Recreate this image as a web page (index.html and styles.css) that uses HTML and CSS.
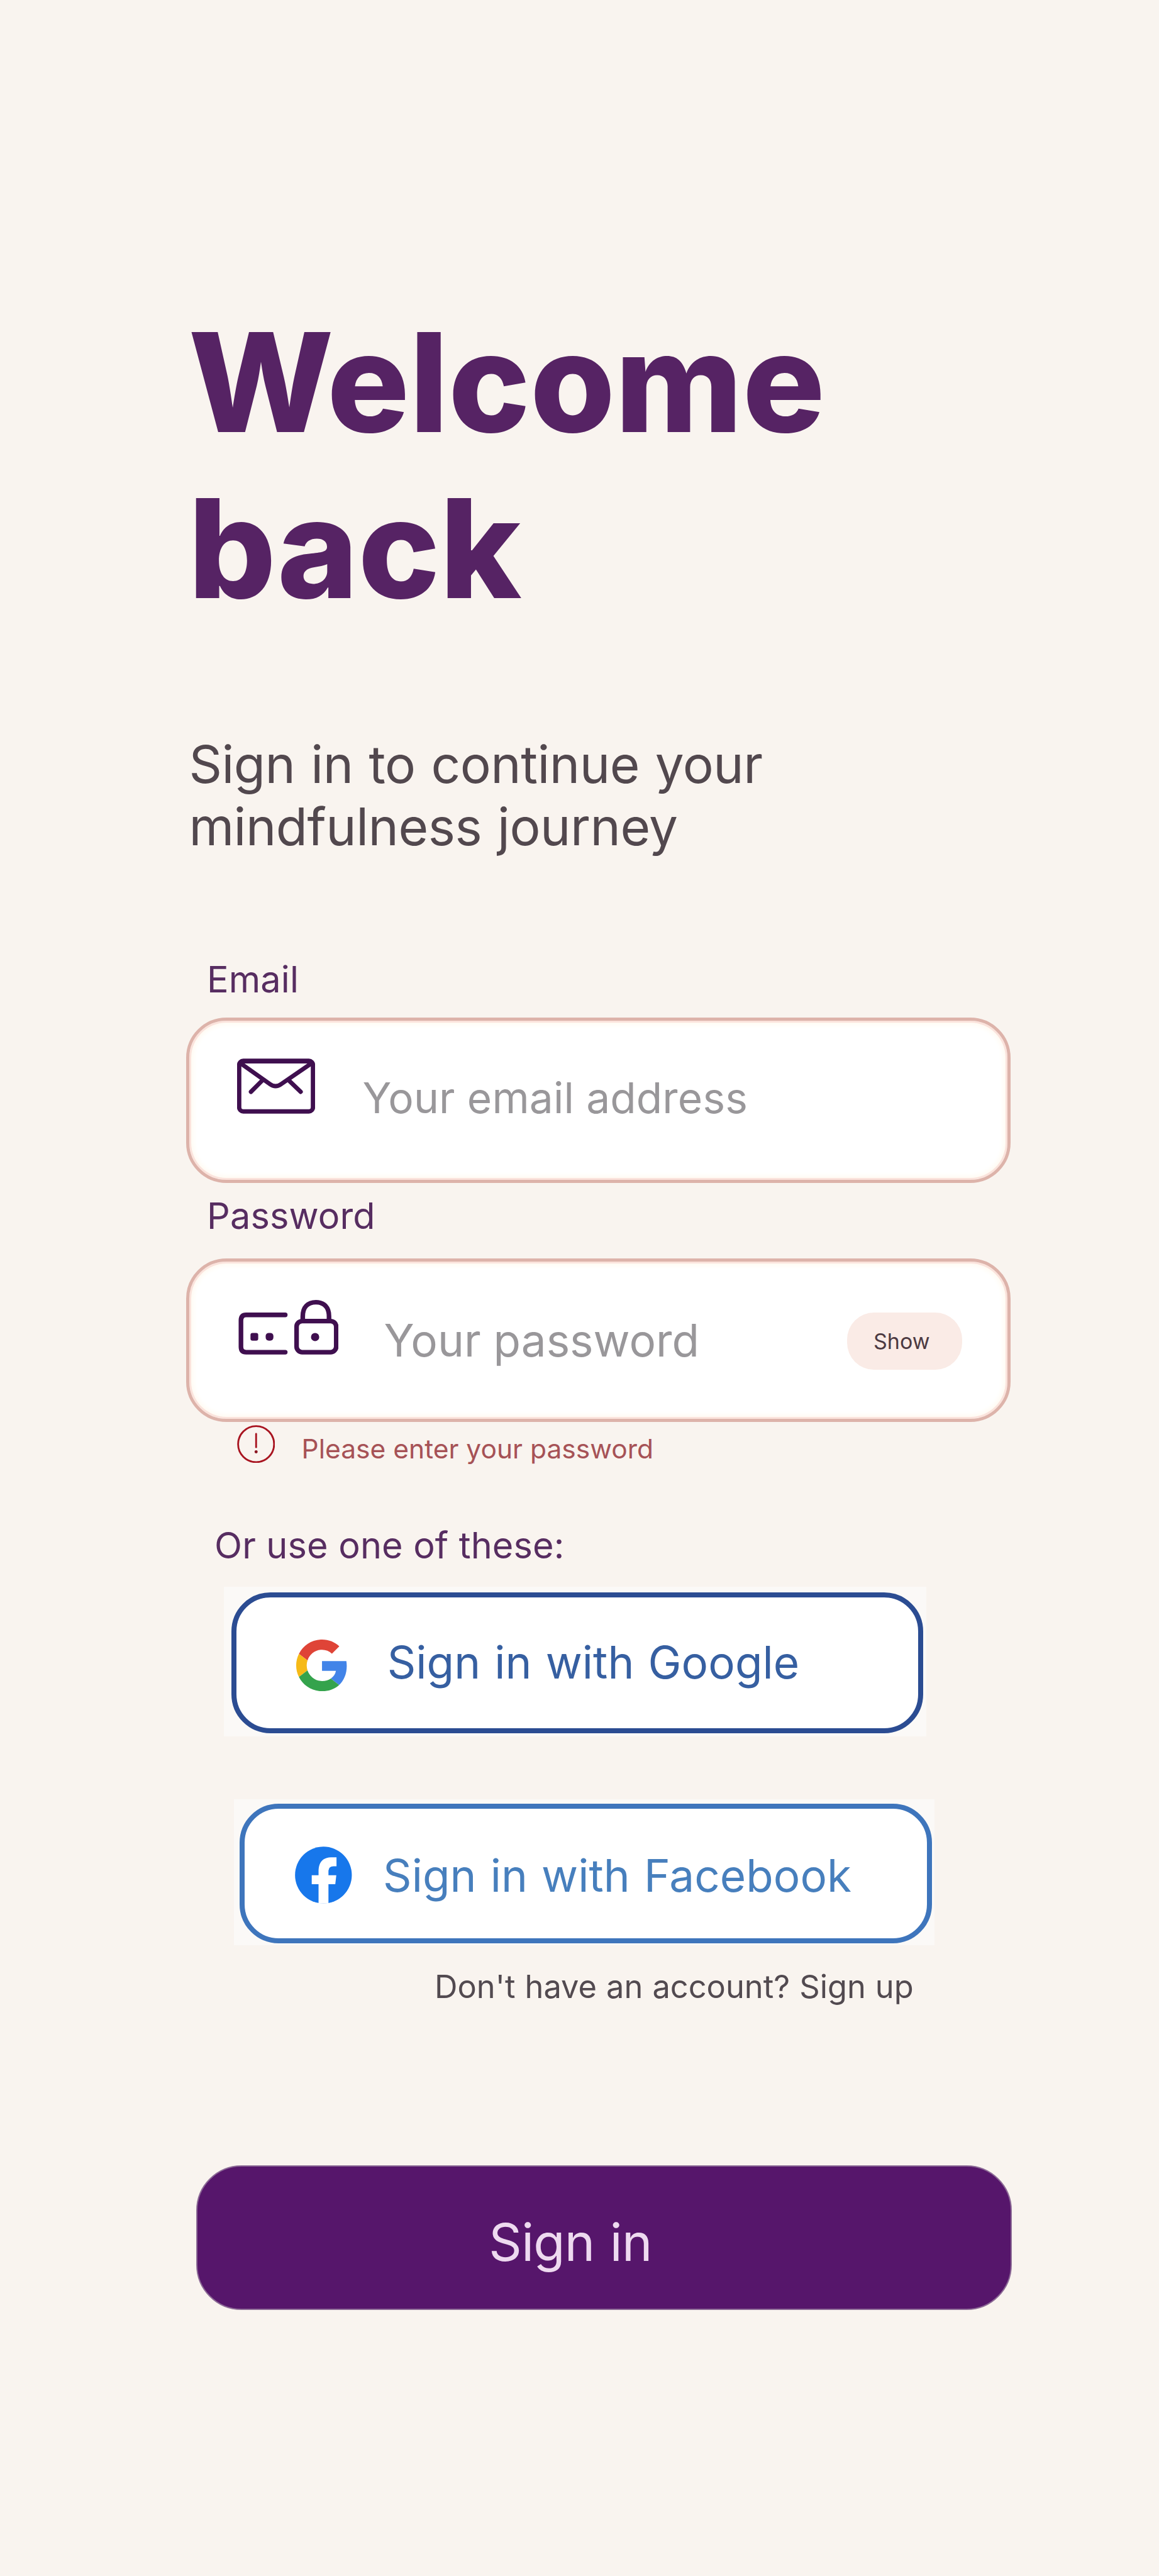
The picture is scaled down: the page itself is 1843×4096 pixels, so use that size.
FILE: index.html
```html
<!DOCTYPE html>
<html lang="en">
<head>
<meta charset="utf-8">
<title>Welcome back</title>
<link rel="stylesheet" href="styles.css">
</head>
<body>
<main class="page">
  <h1 class="title">Welcome<br>back</h1>
  <p class="subtitle">Sign in to continue your<br>mindfulness journey</p>

  <label class="label label-email">Email</label>
  <div class="field field-email">
    <svg class="icon-mail" viewBox="0 0 152 108" fill="none" stroke="#3f0f4f" stroke-width="8.500" stroke-linecap="round" stroke-linejoin="round">
      <rect x="4" y="4.500" width="144" height="99" rx="8"/>
      <path d="M9 11 64 50Q75 58 86 50L143 11M48 44 27 65M101 43 124 65"/>
      <path d="M12 5.500H140"/>
    </svg>
    <span class="placeholder placeholder-email">Your email address</span>
  </div>

  <label class="label label-password">Password</label>
  <div class="field field-password">
    <svg class="icon-lock" viewBox="0 0 194 106" fill="none" stroke="#3f0f4f" stroke-width="9" stroke-linecap="round" stroke-linejoin="round">
      <path d="M91 29H15Q5 29 5 40V91Q5 101.500 15 101.500H91"/>
      <rect x="113" y="41" width="77" height="60.500" rx="11"/>
      <path d="M125 40V32C125 14 135 4.500 150.500 4.500S176 14 176 32V40"/>
      <g fill="#3f0f4f" stroke="none">
        <rect x="23.500" y="64" width="15" height="15" rx="4"/>
        <rect x="53" y="64" width="15" height="15" rx="6"/>
        <circle cx="149" cy="72" r="8"/>
      </g>
    </svg>
    <span class="placeholder placeholder-password">Your password</span>
    <button class="show">Show</button>
  </div>

  <div class="error">
    <svg class="icon-error" viewBox="0 0 74 74" fill="none" stroke="#a81420" stroke-width="3.500" stroke-linecap="round">
      <circle cx="37" cy="37" r="35"/>
      <path d="M37 17V43"/>
      <circle cx="37" cy="52" r="3" fill="#8a1420" stroke="none"/>
    </svg>
    <span class="error-text">Please enter your password</span>
  </div>

  <p class="label label-or">Or use one of these:</p>

  <div class="plate plate-google">
    <button class="social google">
      <svg class="icon-google" viewBox="0 0 47 48">
        <path fill="#df4437" d="M24 9.500c3.540 0 6.710 1.220 9.210 3.600l6.850-6.850C35.900 2.380 30.470 0 24 0 14.620 0 6.510 5.380 2.560 13.220l7.980 6.190C12.430 13.720 17.740 9.500 24 9.500z"/>
        <path fill="#4284e8" d="M46.980 24.550c0-1.570-.150-3.090-.380-4.550H24v9.020h12.940c-.580 2.960-2.260 5.480-4.780 7.180l7.730 6c4.510-4.180 7.090-10.360 7.090-17.650z"/>
        <path fill="#f6ba17" d="M10.530 28.590c-.480-1.450-.760-2.990-.760-4.590s.270-3.140.760-4.590l-7.980-6.190C.920 16.460 0 20.120 0 24c0 3.880.920 7.540 2.560 10.780l7.970-6.190z"/>
        <path fill="#34a34c" d="M24 48c6.480 0 11.930-2.130 15.890-5.810l-7.730-6c-2.150 1.450-4.920 2.300-8.160 2.300-6.260 0-11.570-4.220-13.470-9.910l-7.980 6.190C6.510 42.620 14.620 48 24 48z"/>
      </svg>
      <span class="social-text google-text">Sign in with Google</span>
    </button>
  </div>

  <div class="plate plate-facebook">
    <button class="social facebook">
      <svg class="icon-facebook" viewBox="0 0 111 111">
        <circle cx="55.500" cy="55.500" r="55.300" fill="#1777eb"/>
        <path fill="#fff" d="M46 111V73.300H32.700V55.700H46V46Q47 22 70 21H81V38.300H75Q66 38.300 65.300 47V55.700H80.600L78.600 73.300H65.300V111Z"/>
      </svg>
      <span class="social-text facebook-text">Sign in with Facebook</span>
    </button>
  </div>

  <p class="signup">Don't have an account? Sign up</p>
  <button class="submit">Sign in</button>
</main>
</body>
</html>
```
FILE: styles.css
```css
* { box-sizing: border-box; }

html, body { margin: 0; padding: 0; }

body {
  width: 1843px;
  height: 4096px;
  overflow: hidden;
  background: #f9f4ef;
  font-family: Inter, "Liberation Sans", sans-serif;
}

h1, p { margin: 0; font-weight: 400; }

button {
  margin: 0;
  padding: 0;
  border: 0;
  background: none;
  font: inherit;
  text-align: left;
}

svg { display: block; flex: none; }

.page {
  display: flex;
  flex-direction: column;
  align-items: flex-start;
  padding: 476px 0 0 296px;
}

.title {
  margin-left: 3.6px;
  font-size: 218.4px;
  line-height: 264.3px;
  font-weight: 800;
  color: #562364;
}

.subtitle {
  margin-top: 161.7px;
  margin-left: 4.4px;
  font-size: 81.9px;
  line-height: 99.1px;
  letter-spacing: -0.5px;
  word-spacing: 2.4px;
  color: #52484e;
}

.label {
  display: block;
  font-size: 57.6px;
  line-height: 70px;
  letter-spacing: 0.15px;
  color: #572d61;
}

.label-email { margin: 157.9px 0 0 33px; }
.label-password { margin: 17px 0 0 33px; }
.label-or { margin: 93px 0 0 45px; }

.field {
  display: flex;
  align-items: flex-start;
  width: 1311px;
  border: 5px solid #ddb3aa;
  border-radius: 64px;
  background: #fff;
  box-shadow: inset 0 0 0 3px #fbe3dc, inset 0 0 8px 6px #fffaf0;
}

.field-email { height: 263px; margin-top: 25.3px; }
.field-password { height: 260.3px; margin-top: 33.4px; }

.icon-mail { width: 124px; height: 88px; margin: 60px 0 0 76.4px; }
.icon-lock { width: 159px; height: 86.8px; margin: 61px 0 0 77.6px; }

.placeholder { color: #99979a; white-space: nowrap; }

.placeholder-email {
  margin: 82px 0 0 75px;
  font-size: 67.6px;
  line-height: 81px;
  letter-spacing: 0.16px;
}

.placeholder-password { margin: 82px 0 0 73px; font-size: 71px; line-height: 86px; }

.show {
  width: 183px;
  height: 91px;
  margin: 81px 72px 0 auto;
  padding-left: 42px;
  border-radius: 43px;
  background: #faebe6;
  color: #4c3a42;
  font-size: 34px;
}

.error { display: flex; align-items: flex-start; margin: 4.4px 0 0 80.5px; }
.icon-error { width: 60.5px; height: 60.5px; }
.error-text { margin: 13px 0 0 42.6px; font-size: 42.5px; line-height: 50px; color: #a65256; }

.plate { display: flex; background: #fbf9f7; }
.plate-google { width: 1116.4px; height: 237.5px; margin: 31.5px 0 0 60.3px; padding: 9px 5px 5px 12px; }
.plate-facebook { width: 1114.6px; height: 232.6px; margin: 100px 0 0 75.9px; padding: 7.4px 4px 3px 9.6px; }

.social {
  display: flex;
  align-items: flex-start;
  flex: 1;
  border-radius: 62px;
  background: #fff;
}

.google { border: 8px solid #2b4c92; }
.facebook { border: 8px solid #3e75bc; }

.icon-google { width: 82.4px; height: 82.2px; margin: 67px 0 0 94px; }
.icon-facebook { width: 90.6px; height: 91px; margin: 60px 0 0 80px; }

.social-text {
  font-size: 71px;
  line-height: 86px;
  letter-spacing: 0.08px;
  word-spacing: 2px;
  white-space: nowrap;
}

.google-text { margin: 60px 0 0 63px; color: #365fa1; }
.facebook-text { margin: 63px 0 0 49px; color: #477fbd; }

.signup {
  margin: 35px 0 0 395px;
  font-size: 50.6px;
  line-height: 61px;
  word-spacing: 0.8px;
  color: #524a50;
}

.submit {
  width: 1296.4px;
  height: 229.4px;
  margin: 254px 0 0 16.3px;
  padding: 15px 0 0 463px;
  border: 2px solid #8c6a96;
  border-radius: 72px;
  background: #56166b;
  color: #eedaf0;
  font-size: 81.9px;
  letter-spacing: -0.7px;
  word-spacing: 2px;
}
```
